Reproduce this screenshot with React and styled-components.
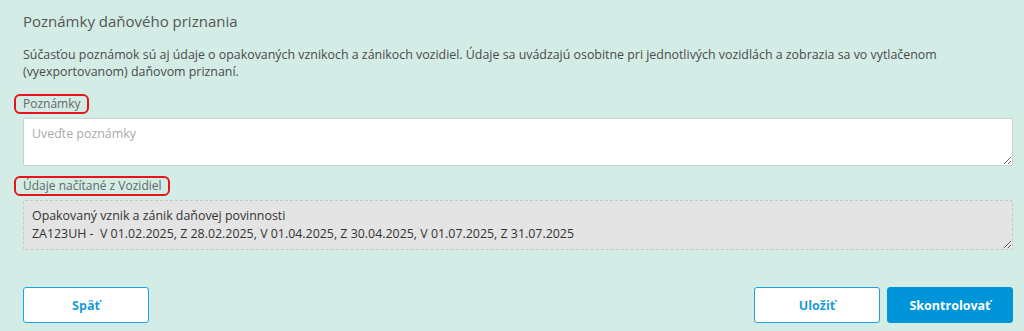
import React from "react";
import styled, { createGlobalStyle } from "styled-components";

const Global = createGlobalStyle`
  html, body { margin: 0; padding: 0; background: #d3ede6; }
  body { font-family: "Open Sans", "Noto Sans", sans-serif; }
  * { box-sizing: border-box; }
`;

const Page = styled.div`
  width: 1024px;
  height: 331px;
  padding: 11px 11px 0 23px;
  display: flex;
  flex-direction: column;
  color: #555;
`;

const Title = styled.h2`
  margin: 0;
  font-size: 15px;
  font-weight: 400;
  line-height: 20px;
  color: #555;
`;

const Description = styled.p`
  margin: 15px 0 0;
  font-size: 12.4px;
  line-height: 17px;
  color: #4a4a4a;
`;

const Field = styled.div`
  display: flex;
  flex-direction: column;
  margin-top: ${(p) => p.$top}px;
`;

const Label = styled.label`
  position: relative;
  align-self: flex-start;
  font-size: 12px;
  line-height: 16px;
  color: #666;
  margin-bottom: 6px;

  &::after {
    content: "";
    position: absolute;
    left: -9px;
    right: -8px;
    top: -2px;
    bottom: -2px;
    border: 2px solid #e8141b;
    border-radius: 6px;
  }
`;

const TextArea = styled.textarea`
  width: 100%;
  height: ${(p) => p.$h}px;
  resize: vertical;
  font-family: inherit;
  font-size: 12.4px;
  line-height: 18px;
  padding: 6px 8px;
  border-radius: 2px;
  outline: none;
  color: #333;
  background: ${(p) => (p.$readOnly ? "#e4e4e4" : "#fff")};
  border: 1px ${(p) => (p.$readOnly ? "dashed #c8c8c8" : "solid #cfcfcf")};
  &::placeholder { color: #aaa; }
`;

const Footer = styled.div`
  margin-top: 37px;
  display: flex;
  align-items: center;
  gap: 7px;
`;

const Spacer = styled.div`
  flex: 1;
`;

const Button = styled.button`
  width: 126px;
  height: 36px;
  border-radius: 3px;
  font-family: inherit;
  font-size: 12.5px;
  font-weight: 700;
  cursor: pointer;
  border: 1px solid ${(p) => (p.$primary ? "#0095d9" : "#1ba3e3")};
  background: ${(p) => (p.$primary ? "#0095d9" : "#fff")};
  color: ${(p) => (p.$primary ? "#fff" : "#1a9bdc")};
`;

export default function App() {
  return (
    <Page>
      <Global />
      <Title>Poznámky daňového priznania</Title>
      <Description>
        Súčasťou poznámok sú aj údaje o opakovaných vznikoch a zánikoch vozidiel. Údaje sa uvádzajú osobitne pri jednotlivých vozidlách a zobrazia sa vo vytlačenom
        (vyexportovanom) daňovom priznaní.
      </Description>
      <Field $top={16}>
        <Label>Poznámky</Label>
        <TextArea $h={48} placeholder="Uveďte poznámky" />
      </Field>
      <Field $top={12}>
        <Label>Údaje načítané z Vozidiel</Label>
        <TextArea
          $h={50}
          $readOnly
          readOnly
          defaultValue={"Opakovaný vznik a zánik daňovej povinnosti\nZA123UH -  V 01.02.2025, Z 28.02.2025, V 01.04.2025, Z 30.04.2025, V 01.07.2025, Z 31.07.2025"}
        />
      </Field>
      <Footer>
        <Button>Späť</Button>
        <Spacer />
        <Button>Uložiť</Button>
        <Button $primary>Skontrolovať</Button>
      </Footer>
    </Page>
  );
}
